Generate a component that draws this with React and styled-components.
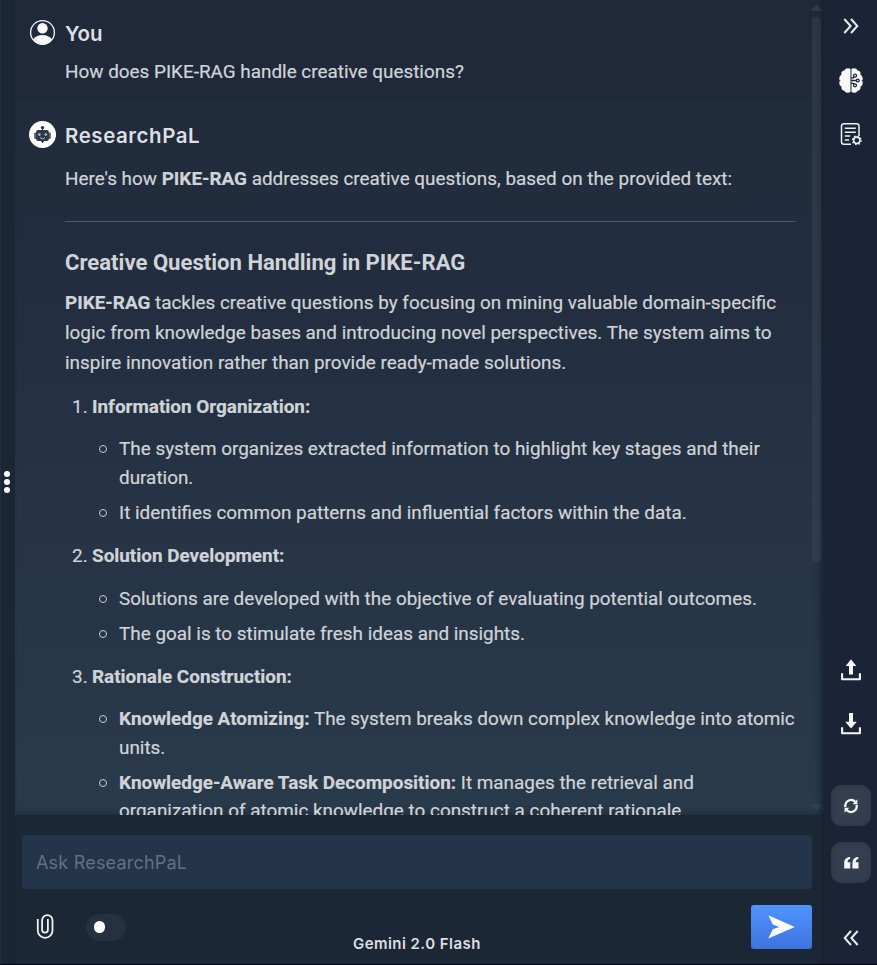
import React from "react";
import styled, { createGlobalStyle, css } from "styled-components";

const Global = createGlobalStyle`
  * { box-sizing: border-box; }
  html, body { margin: 0; padding: 0; overflow: hidden; background: #1c2635; }
`;

const Shell = styled.div`
  display: flex;
  width: 877px;
  height: 965px;
  overflow: hidden;
  background: #1c2736;
  border-bottom: 1px solid #020407;
  color: #d0d3d7;
  font-family: Roboto, "Liberation Sans", sans-serif;
`;

const Handle = styled.div`
  flex: none;
  width: 15px;
  display: flex;
  flex-direction: column;
  align-items: center;
  justify-content: center;
  gap: 2px;
  padding-right: 2px;
  border-left: 1px solid #212d3c;
  background: #1b2635;
`;

const Dot = styled.span`
  width: 6px;
  height: 6px;
  border-radius: 50%;
  background: #fff;
`;

const Main = styled.main`
  flex: none;
  width: 809px;
  display: flex;
  flex-direction: column;
`;

const Thread = styled.section`
  flex: none;
  height: 815px;
  display: flex;
  overflow: hidden;
  background: linear-gradient(180deg, #1f2a3a 0%, #222e3f 35%, #263445 65%, #293a4b 100%);
  box-shadow: inset -4px -4px 9px -3px rgba(25, 36, 48, 0.65);
`;

const Messages = styled.div`
  width: 797px;
  flex: none;
`;

const Message = styled.article`
  padding: 21px 16px 0 50px;
  ${(p) =>
    p.$own &&
    css`
      height: 101px;
      padding-top: 20px;
      background: #1f293a;
      border-radius: 0 0 8px 8px;
    `}
`;

const Author = styled.header`
  display: flex;
  align-items: center;
  margin-left: -36px;
  height: 28px;
  gap: 9px;

  svg {
    flex: none;
    display: block;
    margin-top: -3px;
  }
`;

const Name = styled.span`
  font: 600 20.5px/28px Inter, "Liberation Sans", sans-serif;
  letter-spacing: ${(p) => p.$spacing};
  color: #dedfe1;
`;

const Line = styled.span`
  display: block;
  width: max-content;
  white-space: nowrap;
`;

const Text = styled.div`
  margin-top: ${(p) => p.$gap}px;
  font-size: 18.9px;
  line-height: 30px;
  -webkit-text-stroke: 0.2px currentColor;

  strong { font-weight: 700; }
`;

const Rule = styled.hr`
  height: 1px;
  margin: 27px 0 0;
  border: 0;
  background: #4c5865;
`;

const Heading = styled.h3`
  margin: 25px 0 0;
  font-size: 22.1px;
  line-height: 30px;
  font-weight: 700;
`;

const Outline = styled.div`
  margin-top: 14.7px;
  font-size: 18.9px;
  line-height: 28.6px;
  -webkit-text-stroke: 0.2px currentColor;

  strong { font-weight: 700; }
`;

const Topic = styled.div`
  display: grid;
  grid-template-columns: 27px 1fr;
  margin-top: 14.4px;
  &:first-child { margin-top: 0; }
`;

const TopicNumber = styled.span`
  padding-left: 7px;
`;

const Points = styled.div`
  grid-column: 2;
  display: flex;
  flex-direction: column;
  gap: 6.3px;
  margin-top: 14.2px;
`;

const Point = styled.div`
  display: grid;
  grid-template-columns: 27px 1fr;
`;

const Bullet = styled.i`
  width: 8px;
  height: 8px;
  margin: 10px 0 0 7px;
  border: 1px solid #c9cdd2;
  border-radius: 50%;
`;

const Scrollbar = styled.div`
  flex: none;
  width: 9px;
  display: flex;
  flex-direction: column;
  align-items: center;

  svg { display: block; flex: none; }
`;

const Thumb = styled.div`
  width: 9px;
  height: 545px;
  margin: 6px 0 242px;
  flex: none;
  border-radius: 5px;
  background: linear-gradient(180deg, #2b3646, #303d4d);
`;

const Composer = styled.section`
  flex: 1;
  padding: 20px 12px 0 7px;
  background: #1c2736;
`;

const Field = styled.div`
  height: 54px;
  padding-left: 14px;
  border-radius: 3px;
  background: #24344b;
  color: #647083;
  font: 400 18px/56px Inter, "Liberation Sans", sans-serif;
  letter-spacing: 0.2px;
`;

const Tools = styled.div`
  display: grid;
  grid-template-columns: 64px 266px 1fr 61px;
  height: 44px;
  margin-top: 16px;
`;

const ClipButton = styled.div`
  padding: 8px 0 0 13px;
`;

const Toggle = styled.div`
  width: 40px;
  height: 27px;
  margin-top: 9px;
  padding: 7px 8px;
  border-radius: 14px;
  background: #263140;
`;

const Knob = styled.div`
  width: 11px;
  height: 12px;
  border-radius: 6px;
  background: #fff;
`;

const Model = styled.div`
  padding: 27px 0 0 1px;
  font: 600 15px/24px Inter, "Liberation Sans", sans-serif;
  letter-spacing: 0.45px;
  color: #dcdee0;
`;

const Send = styled.div`
  height: 44px;
  display: flex;
  align-items: center;
  justify-content: center;
  border-radius: 3px;
  background: linear-gradient(180deg, #4f94fd, #3e73df);
`;

const Rail = styled.aside`
  flex: 1;
  display: flex;
  flex-direction: column;
  align-items: center;
  background: #1b2436;
  box-shadow: -2px 0 5px rgba(19, 28, 40, 0.6);
`;

const RailIcon = styled.div`
  width: 40px;
  height: ${(p) => p.$height || 28}px;
  margin: ${(p) => p.$top}px 0 0 1px;
  display: flex;
  align-items: center;
  justify-content: center;
  ${(p) =>
    p.$raised &&
    css`
      border-radius: 10px;
      background: #343e4f;
      box-shadow: inset 0 0 4px #2b3546;
    `}

  svg { display: block; }
`;

const UserIcon = () => (
  <svg width="27" height="27" viewBox="0 0 27 27">
    <circle cx="13.5" cy="13.5" r="11.9" fill="none" stroke="#f8f8f8" strokeWidth="1.3" />
    <circle cx="13.5" cy="9.3" r="5.2" fill="#f8f8f8" />
    <path d="M3.8 20.7C6.2 17.5 9.4 16 13.5 16s7.3 1.5 9.7 4.7A12 12 0 0 1 3.8 20.7z" fill="#f8f8f8" />
  </svg>
);

const RobotIcon = () => (
  <svg width="27" height="27" viewBox="0 0 27 27">
    <circle cx="13.5" cy="13.5" r="13.5" fill="#fff" />
    <circle cx="13.5" cy="6.6" r="1.7" fill="#263345" />
    <path d="M13.5 7v3M13.5 19v3" stroke="#263345" strokeWidth="1" />
    <rect x="5.1" y="11.5" width="3" height="6.4" rx="1.2" fill="#59636f" />
    <rect x="18.9" y="11.5" width="3" height="6.4" rx="1.2" fill="#59636f" />
    <rect x="7.1" y="9.1" width="12.8" height="10.8" rx="2.2" fill="#2b394a" />
    <circle cx="10.3" cy="13.6" r="1.35" fill="#aeb8bf" />
    <circle cx="16.8" cy="13.6" r="1.35" fill="#aeb8bf" />
    <path d="M11 16.7q2.5 2.3 5 0" fill="none" stroke="#b8c0c7" strokeWidth=".9" />
    <path d="M11.7 20h3.6l-1.8 2z" fill="#2b394a" />
  </svg>
);

const Chevrons = ({ left }) => (
  <svg width="16" height="16" viewBox="0 0 16 16" fill="none" stroke="#e8eaec" strokeWidth="2">
    {left ? <path d="M8 1 1.7 8 8 15M14.7 1 8.4 8l6.3 7" /> : <path d="M1.3 1 7.6 8l-6.3 7M8 1l6.3 7L8 15" />}
  </svg>
);

const BrainIcon = () => (
  <svg width="24" height="25" viewBox="0 0 24 25">
    <path
      fill="#f7f8f8"
      d="M11.5.8C9-.3 6.3.2 5.4 2.4 3 2.6 1.8 4.7 2.5 6.8.5 8 .1 10 .4 11.5v2.6c-.3 2 .4 3.9 2.100 4.300C2 21 3.300 22.600 5.400 22.700 6.500 25 9.400 25.200 11.500 24z"
    />
    <path
      fill="#f7f8f8"
      d="M12.500.8C15-.3 17.600.2 18.500 2.400c2.400.2 3.600 2.300 2.900 4.400C23.500 8 23.900 10 23.600 11.500v2.600c.3 2-.4 3.900-2.100 4.300.500 2.600-.800 4.200-2.900 4.300-1.100 2.300-4.100 2.500-6.100 1.300z"
    />
    <g fill="none" stroke="#1b2436" strokeWidth="1.3">
      <path d="M12 9.800h2.300l.9-1.100M12 12.500h5.400M12 15.300h2.300l.9 1.100" />
      <circle cx="16" cy="7.700" r="1.500" />
      <circle cx="18.800" cy="12.500" r="1.400" />
      <circle cx="16" cy="17.300" r="1.500" />
    </g>
    <path d="M0 12.700h1.300M22.700 12.700H24" stroke="#1b2436" strokeWidth="1" />
  </svg>
);

const NotesIcon = () => (
  <svg width="22" height="24" viewBox="0 0 22 24" fill="none" stroke="#edf0f1">
    <path strokeWidth="1.5" d="M11 22.200H3.800A2.300 2.300 0 0 1 1.500 20V4A2.300 2.300 0 0 1 3.800 1.700h12.900A2.300 2.300 0 0 1 19 4v10" />
    <path strokeWidth="1.5" d="M4.800 6.300h11M4.800 10.200h11M4.800 14.100h5.300M4.800 18h4.300" />
    <circle cx="16.800" cy="18.300" r="3.200" strokeWidth="1.6" />
    <circle cx="16.800" cy="18.300" r="4.300" strokeWidth="1.3" strokeDasharray="1.6 1.78" />
  </svg>
);

const TransferIcon = ({ down }) => (
  <svg width="20" height="22" viewBox="0 0 20 22">
    <path d="M1.100 14.300v6h17.800v-6" fill="none" stroke="#f5f6f6" strokeWidth="2.1" strokeLinejoin="round" />
    {down ? (
      <path d="M8 0h4v8.800h3.800L10 15.600 4.200 8.800H8z" fill="#f5f6f6" />
    ) : (
      <path d="M8 15.500V7H4.700L10 .2 15.300 7H12v8.500z" fill="#f5f6f6" />
    )}
  </svg>
);

const SyncIcon = () => (
  <svg width="14" height="16" viewBox="0 0 14 16">
    <path d="M1.300 9.200C.7 5 3.600 1.900 7 1.900c1.800 0 3.300.7 4.400 2M12.700 6.800C13.300 11 10.400 14.100 7 14.100c-1.800 0-3.300-.7-4.400-2" fill="none" stroke="#f3f4f5" strokeWidth="2.3" />
    <path d="M13.400 1.300V6.200H8.700zM.6 14.700V9.800h4.700z" fill="#f3f4f5" />
  </svg>
);

const QuoteIcon = () => (
  <svg width="15" height="12" viewBox="0 0 15 12" fill="#f5f6f6">
    <path d="M6.100 0v2C4.400 2.200 3.600 3.500 3.600 5.200h2.700V11.500H.2V6C.2 2.500 2.500 0 6.100 0zM14.300 0v2c-1.700.2-2.500 1.500-2.500 3.200h2.700V11.500H8.400V6c0-3.500 2.300-6 5.900-6z" />
  </svg>
);

const ClipIcon = () => (
  <svg width="20" height="27" viewBox="0 0 20 27" fill="none" stroke="#eef0f2" strokeWidth="1.8">
    <path d="M2.800 6v11.500a7.350 7.350 0 0 0 14.700 0V7.300a5.200 5.200 0 0 0-10.400 0v9.500a2.900 2.900 0 0 0 5.800 0V6" />
  </svg>
);

const SendIcon = () => (
  <svg width="27" height="24" viewBox="0 0 27 24">
    <path d="M.3.300 26.800 12 .3 23.600 4.800 14.200 11.200 12 4.800 9.600z" fill="#f7f9fb" />
  </svg>
);

const topics = [
  {
    title: "Information Organization:",
    points: [
      [{ t: "The system organizes extracted information to highlight key stages and their" }, { t: "duration." }],
      [{ t: "It identifies common patterns and influential factors within the data." }],
    ],
  },
  {
    title: "Solution Development:",
    points: [
      [{ t: "Solutions are developed with the objective of evaluating potential outcomes." }],
      [{ t: "The goal is to stimulate fresh ideas and insights." }],
    ],
  },
  {
    title: "Rationale Construction:",
    points: [
      [{ b: "Knowledge Atomizing:", t: " The system breaks down complex knowledge into atomic" }, { t: "units." }],
      [
        { b: "Knowledge-Aware Task Decomposition:", t: " It manages the retrieval and" },
        { t: "organization of atomic knowledge to construct a coherent rationale." },
      ],
    ],
  },
];

export default function App() {
  return (
    <Shell>
      <Global />
      <Handle>
        <Dot />
        <Dot />
        <Dot />
      </Handle>
      <Main>
        <Thread>
          <Messages>
            <Message $own>
              <Author>
                <UserIcon />
                <Name $spacing="0">You</Name>
              </Author>
              <Text $gap={9}>
                <Line>How does PIKE-RAG handle creative questions?</Line>
              </Text>
            </Message>
            <Message>
              <Author>
                <RobotIcon />
                <Name $spacing="0.55px">ResearchPaL</Name>
              </Author>
              <Text $gap={14}>
                <Line>
                  Here's how <strong>PIKE-RAG</strong> addresses creative questions, based on the provided text:
                </Line>
              </Text>
              <Rule />
              <Heading>
                <Line>Creative Question Handling in PIKE-RAG</Line>
              </Heading>
              <Text $gap={11}>
                <Line>
                  <strong>PIKE-RAG</strong> tackles creative questions by focusing on mining valuable domain-specific
                </Line>
                <Line>logic from knowledge bases and introducing novel perspectives. The system aims to</Line>
                <Line>inspire innovation rather than provide ready-made solutions.</Line>
              </Text>
              <Outline>
                {topics.map((topic, i) => (
                  <Topic key={topic.title}>
                    <TopicNumber>{i + 1}.</TopicNumber>
                    <Line>
                      <strong>{topic.title}</strong>
                    </Line>
                    <Points>
                      {topic.points.map((lines, j) => (
                        <Point key={j}>
                          <Bullet />
                          <div>
                            {lines.map((l) => (
                              <Line key={l.t}>
                                {l.b && <strong>{l.b}</strong>}
                                {l.t}
                              </Line>
                            ))}
                          </div>
                        </Point>
                      ))}
                    </Points>
                  </Topic>
                ))}
              </Outline>
            </Message>
          </Messages>
          <Scrollbar>
            <svg width="9" height="11" viewBox="0 0 9 11">
              <path d="M4.500 4 9 9v2H0V9z" fill="#303b4a" />
            </svg>
            <Thumb />
            <svg width="9" height="8" viewBox="0 0 9 8">
              <path d="M0 0h9v2L4.500 7 0 2z" fill="#334150" />
            </svg>
          </Scrollbar>
        </Thread>
        <Composer>
          <Field>Ask ResearchPaL</Field>
          <Tools>
            <ClipButton>
              <ClipIcon />
            </ClipButton>
            <Toggle>
              <Knob />
            </Toggle>
            <Model>Gemini 2.0 Flash</Model>
            <Send>
              <SendIcon />
            </Send>
          </Tools>
        </Composer>
      </Main>
      <Rail>
        <RailIcon $top={12}>
          <Chevrons />
        </RailIcon>
        <RailIcon $top={26}>
          <BrainIcon />
        </RailIcon>
        <RailIcon $top={26}>
          <NotesIcon />
        </RailIcon>
        <RailIcon $top={508}>
          <TransferIcon />
        </RailIcon>
        <RailIcon $top={26}>
          <TransferIcon down />
        </RailIcon>
        <RailIcon $top={47} $height={41} $raised>
          <SyncIcon />
        </RailIcon>
        <RailIcon $top={16} $height={41} $raised>
          <QuoteIcon />
        </RailIcon>
        <RailIcon $top={41}>
          <Chevrons left />
        </RailIcon>
      </Rail>
    </Shell>
  );
}
